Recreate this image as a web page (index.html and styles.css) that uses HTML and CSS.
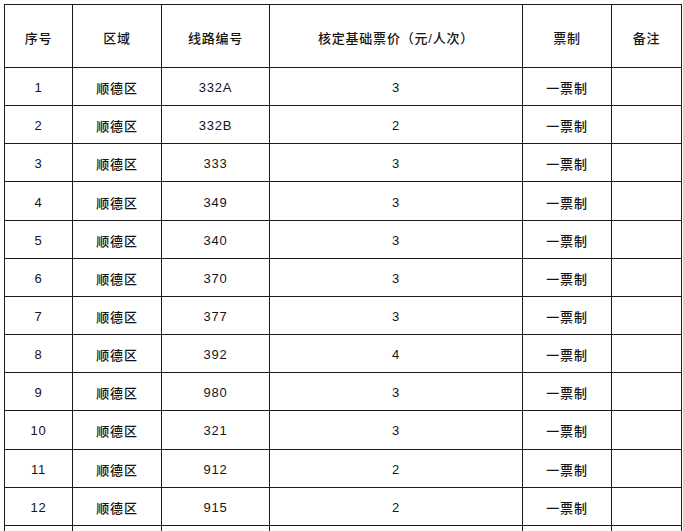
FILE: index.html
```html
<!DOCTYPE html>
<html lang="zh-CN">
<head>
<meta charset="utf-8">
<title>票价表</title>
<link rel="stylesheet" href="styles.css">
</head>
<body>
<table class="fares">
  <colgroup>
    <col class="c1"><col class="c2"><col class="c3"><col class="c4"><col class="c5"><col class="c6">
  </colgroup>
  <thead>
    <tr class="head"><th>序号</th><th>区域</th><th>线路编号</th><th>核定基础票价（元/人次）</th><th>票制</th><th>备注</th></tr>
  </thead>
  <tbody>
    <tr><td>1</td><td>顺德区</td><td>332A</td><td>3</td><td>一票制</td><td></td></tr>
    <tr><td>2</td><td>顺德区</td><td>332B</td><td>2</td><td>一票制</td><td></td></tr>
    <tr><td>3</td><td>顺德区</td><td>333</td><td>3</td><td>一票制</td><td></td></tr>
    <tr><td>4</td><td>顺德区</td><td>349</td><td>3</td><td>一票制</td><td></td></tr>
    <tr><td>5</td><td>顺德区</td><td>340</td><td>3</td><td>一票制</td><td></td></tr>
    <tr><td>6</td><td>顺德区</td><td>370</td><td>3</td><td>一票制</td><td></td></tr>
    <tr><td>7</td><td>顺德区</td><td>377</td><td>3</td><td>一票制</td><td></td></tr>
    <tr><td>8</td><td>顺德区</td><td>392</td><td>4</td><td>一票制</td><td></td></tr>
    <tr><td>9</td><td>顺德区</td><td>980</td><td>3</td><td>一票制</td><td></td></tr>
    <tr><td>10</td><td>顺德区</td><td>321</td><td>3</td><td>一票制</td><td></td></tr>
    <tr><td>11</td><td>顺德区</td><td>912</td><td>2</td><td>一票制</td><td></td></tr>
    <tr><td>12</td><td>顺德区</td><td>915</td><td>2</td><td>一票制</td><td></td></tr>
    <tr><td></td><td></td><td></td><td></td><td></td><td></td></tr>
  </tbody>
</table>
</body>
</html>
```
FILE: styles.css
```css
html, body {
  margin: 0;
  padding: 0;
  background: #ffffff;
}
body {
  padding: 4px 0 0 4px;
  font-family: "Liberation Sans", "Noto Sans CJK SC", sans-serif;
  font-size: 13px;
  font-weight: 500;
  color: #151515;
}
.fares {
  border-collapse: collapse;
  table-layout: fixed;
  width: 677px;
}
.c1 { width: 68px; }
.c2 { width: 89px; }
.c3 { width: 108px; }
.c4 { width: 253px; }
.c5 { width: 89px; }
.c6 { width: 70px; }
.fares th,
.fares td {
  border: 1px solid #1c1c1c;
  text-align: center;
  vertical-align: middle;
  padding: 2px 0 0 0;
  font-weight: 500;
  letter-spacing: 0.8px;
}
.head th {
  height: 60px;
}
.fares td {
  height: 35.17px;
}
```
